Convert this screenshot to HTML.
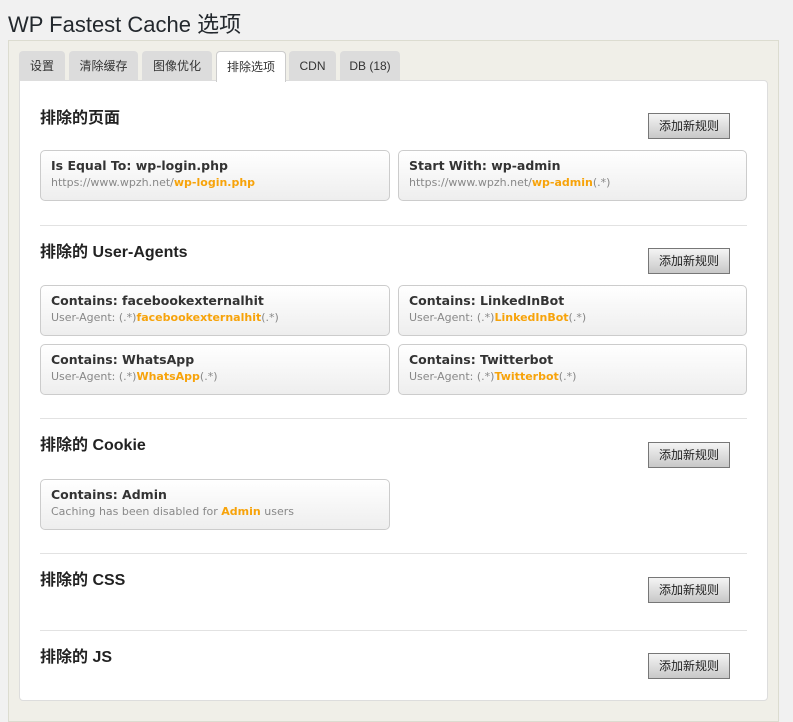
<!DOCTYPE html><html><head><meta charset="utf-8"><style>
body{margin:0;background:#f1f1f1;font-family:"Liberation Sans","Noto Sans CJK SC",sans-serif;color:#23282d;width:793px;height:711px;overflow:hidden;position:relative}
h1{position:absolute;left:8px;top:7px;margin:0;font-weight:400;font-size:22px;color:#23282d}
.outer{position:absolute;left:8px;top:40px;width:769px;height:680px;background:#f0efe8;border:1px solid #dcdcd0}
.tab{position:absolute;top:51px;height:29px;background:#dcdcdc;border-radius:4px 4px 0 0;font-size:12px;line-height:31px;text-align:center;color:#333}
.tab.a{background:#fff;border:1px solid #ccc;border-bottom:none;height:30px}
.panel{position:absolute;left:19px;top:80px;width:747px;height:619px;background:#fff;border:1px solid #ddd;border-radius:0 4px 4px 4px}
.h{position:absolute;left:40px;font-size:16px;font-weight:bold;color:#222}
.btn{position:absolute;left:648px;width:80px;height:24px;border:1px solid #777;background:linear-gradient(#f4f4f4,#c8c8c8);font-size:12px;line-height:24px;text-align:center;color:#222}
.card{position:absolute;width:350px;height:51px;border:1px solid #ccc;border-radius:5px;background:linear-gradient(#fff,#eee);box-sizing:border-box;padding:7px 0 0 10px;font-family:"DejaVu Sans",Verdana,sans-serif}
.card b{display:block;font-size:12.5px;color:#333}
.card span{display:block;font-size:11px;color:#888;margin-top:3px}
.card i{font-style:normal;font-weight:bold;color:#f7a30a}
.l{left:40px}.r{left:398px;width:349px}
.d{position:absolute;left:40px;width:707px;border-top:1px solid #e2e2e2}
</style></head><body>
<h1>WP Fastest Cache 选项</h1>
<div class="outer"></div>
<div class="tab" style="left:19px;width:46px">设置</div>
<div class="tab" style="left:69px;width:69px">清除缓存</div>
<div class="tab" style="left:142px;width:70px">图像优化</div>
<div class="panel"></div>
<div class="tab a" style="left:216px;width:68px">排除选项</div>
<div class="tab" style="left:289px;width:47px">CDN</div>
<div class="tab" style="left:340px;width:60px">DB (18)</div>

<div class="h" style="top:104px">排除的页面</div><div class="btn" style="top:113px">添加新规则</div>
<div class="card l" style="top:150px"><b>Is Equal To: wp-login.php</b><span>https://www.wpzh.net/<i>wp-login.php</i></span></div>
<div class="card r" style="top:150px"><b>Start With: wp-admin</b><span>https://www.wpzh.net/<i>wp-admin</i>(.*)</span></div>
<div class="d" style="top:225px"></div>
<div class="h" style="top:238px">排除的 User-Agents</div><div class="btn" style="top:248px">添加新规则</div>
<div class="card l" style="top:285px"><b>Contains: facebookexternalhit</b><span>User-Agent: (.*)<i>facebookexternalhit</i>(.*)</span></div>
<div class="card r" style="top:285px"><b>Contains: LinkedInBot</b><span>User-Agent: (.*)<i>LinkedInBot</i>(.*)</span></div>
<div class="card l" style="top:344px"><b>Contains: WhatsApp</b><span>User-Agent: (.*)<i>WhatsApp</i>(.*)</span></div>
<div class="card r" style="top:344px"><b>Contains: Twitterbot</b><span>User-Agent: (.*)<i>Twitterbot</i>(.*)</span></div>
<div class="d" style="top:418px"></div>
<div class="h" style="top:431px">排除的 Cookie</div><div class="btn" style="top:442px">添加新规则</div>
<div class="card l" style="top:479px"><b>Contains: Admin</b><span>Caching has been disabled for <i>Admin</i> users</span></div>
<div class="d" style="top:553px"></div>
<div class="h" style="top:566px">排除的 CSS</div><div class="btn" style="top:577px">添加新规则</div>
<div class="d" style="top:630px"></div>
<div class="h" style="top:643px">排除的 JS</div><div class="btn" style="top:653px">添加新规则</div>
</body></html>
